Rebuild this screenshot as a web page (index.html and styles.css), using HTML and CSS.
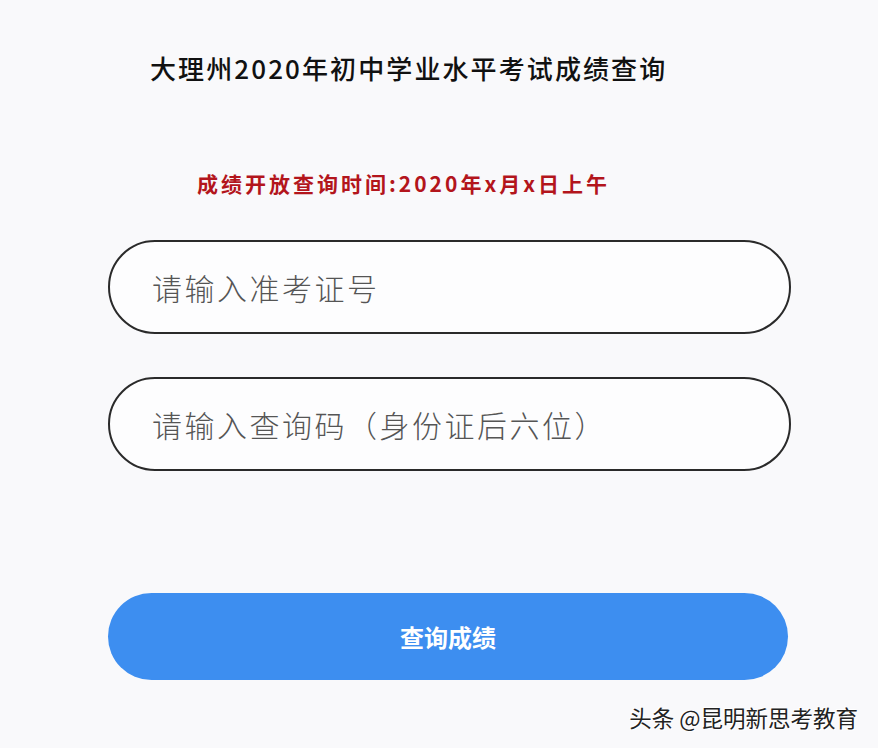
FILE: index.html
```html
<!DOCTYPE html>
<html lang="zh-CN">
<head>
<meta charset="utf-8">
<title>大理州2020年初中学业水平考试成绩查询</title>
<link rel="stylesheet" href="styles.css">
</head>
<body>
<div class="page">
  <h1 class="title">大理州2020年初中学业水平考试成绩查询</h1>
  <p class="notice">成绩开放查询时间:2020年x月x日上午</p>
  <form class="form">
    <input class="field" type="text" placeholder="请输入准考证号">
    <input class="field field-second" type="text" placeholder="请输入查询码（身份证后六位）">
    <button class="submit" type="button">查询成绩</button>
  </form>
  <div class="watermark">头条 @昆明新思考教育</div>
</div>
</body>
</html>
```

FILE: styles.css
```css
html, body {
  margin: 0;
  padding: 0;
  background: #f9f9fb;
}
body {
  font-family: "Noto Sans CJK SC", "Noto Sans", sans-serif;
  width: 878px;
  height: 748px;
  overflow: hidden;
  position: relative;
}
.page {
  display: flex;
  flex-direction: column;
  padding-left: 108px;
  padding-top: 50px;
}
.title {
  margin: 0 0 0 42px;
  font-size: 26px;
  font-weight: 500;
  letter-spacing: 2.1px;
  line-height: 36px;
  color: #111;
}
.notice {
  margin: 83px 0 0 89px;
  font-size: 21px;
  font-weight: 700;
  letter-spacing: 3px;
  line-height: 28px;
  color: #b3151c;
}
.form {
  display: flex;
  flex-direction: column;
  margin-top: 43px;
}
.field {
  box-sizing: border-box;
  width: 683px;
  height: 94px;
  border: 2px solid #2a2a2a;
  border-radius: 47px;
  background: #fdfdfe;
  padding: 0 0 0 42px;
  font-family: "Noto Sans CJK SC", sans-serif;
  font-size: 30px;
  font-weight: 300;
  letter-spacing: 2.5px;
  color: #444;
  outline: none;
}
.field::placeholder {
  color: #555;
}
.field-second {
  margin-top: 43px;
}
.submit {
  margin-top: 122px;
  width: 680px;
  height: 87px;
  border: none;
  border-radius: 44px;
  background: #3d8ef0;
  color: #fff;
  font-family: "Noto Sans CJK SC", sans-serif;
  font-size: 24px;
  font-weight: 700;
  padding: 0;
}
.watermark {
  position: absolute;
  right: 20px;
  bottom: 15px;
  font-size: 22.5px;
  color: #222;
  text-shadow: 1px 1px 0 #fff, -1px -1px 0 #fff;
}
```
